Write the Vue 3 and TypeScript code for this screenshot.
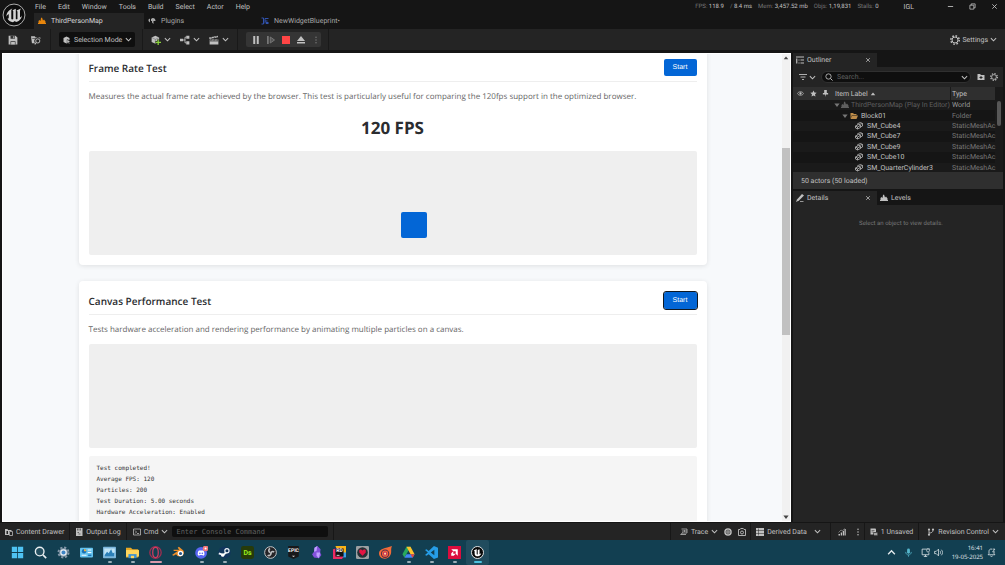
<script setup lang="ts">
import { h, ref } from 'vue'

const icons: Record<string, string> = {
  chevron: '<path d="M2 5 8 11 14 5" fill="none" stroke="currentColor" stroke-width="2.4"/>',
  chevronUp: '<path d="M2 11 8 5 14 11" fill="none" stroke="currentColor" stroke-width="2.4"/>',
  close: '<path d="M3 3 13 13M13 3 3 13" fill="none" stroke="currentColor" stroke-width="2"/>',
  minus: '<path d="M2 8H14" stroke="currentColor" stroke-width="2"/>',
  restore: '<path d="M2 5h9v9H2zM5 5V2h9v9h-3" fill="none" stroke="currentColor" stroke-width="1.8"/>',
  dots: '<g fill="currentColor"><circle cx="8" cy="2.5" r="1.5"/><circle cx="8" cy="8" r="1.5"/><circle cx="8" cy="13.5" r="1.5"/></g>',
  ring: '<circle cx="8" cy="8" r="7.3" fill="#0c0c0c" stroke="#bdbdbd" stroke-width=".6"/><path d="M2.9 9.2C3 6.200 4.800 4.400 7 3.600 6.300 4.200 6.200 4.700 6.200 5.300V10.300C6.200 11 6.900 11.200 7.500 10.700V5.300L7 4.800 9.200 3.900V10.600C9.600 11 10 10.900 10.300 10.600V5.600L9.700 5 12.700 3.700C12 4.600 12 5.100 12 6V9.700C12.600 9.400 13 8.900 13.300 8.300 13 10.600 11.300 12.300 9.300 12.700L8.600 12 7.300 12.900C5.500 12.600 4.200 11.700 3.600 10.400 4.200 10.600 4.500 10.300 4.500 9.700V7.400C3.900 7.700 3.300 8.400 2.900 9.200Z" fill="#d2d2d2"/>',
  level: '<path d="M0 14V12H16V14ZM1 12V8L3 6 5 8 6 2 8 1 10 7 12 5 15 9V12Z" fill="currentColor"/>',
  plug: '<path d="M9 2C14 2 15 5 15 8H11V14L8 11V8H6V4ZM1 5 4 3V11L1 8Z" fill="currentColor"/>',
  widget: '<path d="M1 2H5V14H1M8 3H15M8 3V13M8 8H13" fill="none" stroke="currentColor" stroke-width="2"/><path d="M10 10h5v4h-5z" fill="currentColor"/>',
  save: '<path d="M1 1H12L15 4V15H1Z" fill="currentColor"/><path d="M4 1H11V6H4ZM4 10H12V15H4Z" fill="#333"/><path d="M8.500 2H10V5H8.500ZM5 11H11V15H5Z" fill="currentColor"/>',
  browse: '<path d="M0 2H6L7.500 4H15V6.500A5 5 0 0 0 6.500 13H1.500Z" fill="currentColor"/><path d="M2 5.500H8" stroke="#252525"/><circle cx="10.800" cy="9.500" r="3.300" fill="#252525" stroke="currentColor" stroke-width="1.500"/><path d="M8.500 12 6 15" stroke="currentColor" stroke-width="1.800"/>',
  mode: '<path d="M7 1 13 4V8L8 7 9 14 7 15 1 12V4Z" fill="currentColor"/><path d="M8 7 15 11 12 12 13.500 15 12 16 10.500 13 8 15Z" fill="currentColor" stroke="#101010" stroke-width=".7"/>',
  addCube: '<path d="M7 1 13 4V11L7 14 1 11V4Z" fill="currentColor"/><path d="M1 4 7 7 13 4M7 7V14" fill="none" stroke="#555" stroke-width=".7"/><path d="M11.500 7V16M7 11.500H16" stroke="#252525" stroke-width="4"/><path d="M11.500 7.500V16M7.300 11.700H16" stroke="#8bd33d" stroke-width="2"/>',
  blueprint: '<path d="M0 6H5V10H0ZM10 1H15V6H10ZM10 10H15V15H10Z" fill="currentColor"/><path d="M5 8H8M10 3.500H8V12.500H10" fill="none" stroke="currentColor" stroke-width="1.400"/>',
  clapper: '<path d="M1 7H15V15H1ZM0 4 14 1 14.600 3.500 .8 6.400Z" fill="currentColor"/><path d="M3 3.500 5 5.500M7 2.500 9 4.500M11 2 13 4M4 7 3 9M9 7 8 9M14 7 13 9M1 9.500H15" stroke="#252525" stroke-width="1.200"/>',
  pause: '<path d="M2.500 0H6.500V16H2.500ZM9.500 0H13.500V16H9.500Z" fill="currentColor"/>',
  step: '<path d="M0 0H3.500V16H0Z" fill="currentColor"/><path d="M6.500 2 15 8 6.500 14Z" fill="#555" stroke="currentColor" stroke-width="2"/>',
  stop: '<path d="M0 0H16V16H0Z" fill="currentColor"/>',
  eject: '<path d="M8 0 16 10H0ZM0 12H16V15H0Z" fill="currentColor"/>',
  gear: '<circle cx="8" cy="8" r="4.800" fill="none" stroke="currentColor" stroke-width="1.600"/><circle cx="8" cy="8" r="6.700" fill="none" stroke="currentColor" stroke-width="2.400" stroke-dasharray="2.630 2.630"/>',
  outliner: '<path d="M0 2H16M5 8H7M9 8H16M5 14H7M9 14H16M1.500 5V15" stroke="currentColor" stroke-width="2.400" fill="none"/>',
  filter: '<path d="M0 3H16M3 8H13M6 13H10" stroke="currentColor" stroke-width="1.800"/>',
  search: '<circle cx="7" cy="7" r="5.300" fill="none" stroke="currentColor" stroke-width="1.700"/><path d="M11 11 15 15" stroke="currentColor" stroke-width="2"/>',
  newFolder: '<path d="M1 2H6L8 4H15V14H1Z" fill="currentColor"/><path d="M8 6V12M5 9H11" stroke="#252525" stroke-width="2"/>',
  eye: '<path d="M1 8C4 2.500 12 2.500 15 8 12 13.500 4 13.500 1 8Z" fill="none" stroke="currentColor" stroke-width="1.600"/><circle cx="8" cy="8" r="2.600" fill="currentColor"/>',
  star: '<path d="M8 1 10.200 5.700 15.300 6.300 11.500 9.800 12.500 15 8 12.400 3.500 15 4.500 9.800 .7 6.300 5.800 5.700Z" fill="currentColor"/>',
  pin: '<path d="M5 0H11V7H14V10.500H9L8 16 7 10.500H2V7H5Z" fill="currentColor"/>',
  up: '<path d="M8 4 14 11H2Z" fill="currentColor"/>',
  down: '<path d="M8 13 15 4H1Z" fill="currentColor"/>',
  folder: '<path d="M1 13V2H6L8 4H13V6H4Z" fill="currentColor"/><path d="M4 7H16L13 14H1Z" fill="currentColor"/>',
  mesh: '<g fill="none" stroke="currentColor" stroke-width="1.500"><path d="M1 8 7 5 11 7 11 11 5 14 1 12ZM1 8 5 10 11 7M5 10V14"/><path d="M5 5V3.500L11 1 15 3V8L11 10"/><path d="M8 5 15 3"/></g>',
  pencil: '<path d="M0 16 2 11 12 0 16 3 6 13Z" fill="currentColor"/><path d="M8 15H15" stroke="currentColor" stroke-width="1.500"/>',
  drawer: '<path d="M0 2H5L6 4H13V6H8V14H0Z" fill="currentColor"/><path d="M9 7H15V15H9ZM4 6V12" fill="none" stroke="currentColor" stroke-width="1.500"/><path d="M3 6H6V12H3Z" fill="#252525"/>',
  log: '<path d="M2 0H15V16H2Z" fill="currentColor"/><path d="M5 1V5M8 1V5M11 1V5M5 9H8M7 12H11" stroke="#252525" stroke-width="1.200"/>',
  console: '<path d="M1 2H15V14H1Z" fill="none" stroke="currentColor" stroke-width="1.500"/><path d="M4 5 7 8 4 11M8 11H12" fill="none" stroke="currentColor" stroke-width="1.500"/>',
  trace: '<path d="M3 2H14V10H4M6 4V8M9 4V8M12 4V8M1 13H12M2 13 5 9" fill="none" stroke="currentColor" stroke-width="1.500"/>',
  record: '<circle cx="8" cy="8" r="7.500" fill="currentColor"/><circle cx="8" cy="8" r="4" fill="none" stroke="#252525" stroke-width="1.300"/><circle cx="8" cy="8" r="1.300" fill="#252525"/>',
  camera: '<path d="M1 3H4L5.500 1H10.500L12 3H15V15H1Z" fill="none" stroke="currentColor" stroke-width="1.800"/><circle cx="8" cy="9" r="3" fill="none" stroke="currentColor" stroke-width="1.800"/>',
  data: '<path d="M0 0H16V5H0ZM0 6H16V10H0ZM0 11H16V16H0Z" fill="currentColor"/><path d="M5 1V15" stroke="#252525"/>',
  bars: '<path d="M1 12H4V15H1ZM5.500 9H8V15H5.500ZM9.500 6H12V15H9.500ZM13 2H15.500V15H13Z" fill="currentColor"/><path d="M1 9 6 4 9 6 13 1" fill="none" stroke="currentColor"/>',
  unsaved: '<path d="M1 1H11L12 3V8H7V13H1Z" fill="currentColor"/><path d="M3 5H9M3 8H7" stroke="#252525"/><path d="M8 9H15V15H8ZM12 9V15" fill="currentColor" stroke="#252525" stroke-width=".8"/>',
  branch: '<path d="M4 3V13M4 10C8 10 12 9 12 4" fill="none" stroke="currentColor" stroke-width="1.800"/><circle cx="4" cy="3" r="2.200" fill="currentColor"/><circle cx="4" cy="13.500" r="2.200" fill="currentColor"/><circle cx="12" cy="3" r="2.200" fill="currentColor"/>',
  mic: '<rect x="5.500" y="1" width="5" height="9" rx="2.500" fill="currentColor"/><path d="M3 7C3 14 13 14 13 7M8 12.500V15.500" fill="none" stroke="currentColor" stroke-width="1.300"/>',
  monitor: '<path d="M9 2H2V12H14V8M5 15H11M8 12V15" fill="none" stroke="currentColor" stroke-width="1.400"/><path d="M10 2H15V5C15 8 10 8 10 5ZM11 0V2M14 0V2" fill="none" stroke="currentColor" stroke-width="1.200"/>',
  speaker: '<path d="M1 6H4L8 2V14L4 10H1Z" fill="none" stroke="currentColor" stroke-width="1.300"/><path d="M10.500 5C12 7 12 9 10.500 11M13 3C16 6 16 10 13 13" fill="none" stroke="currentColor" stroke-width="1.300"/>',
  bell: '<path d="M9 2C5 1 3 4 3.500 7V10L2 12H14L12.500 10V8M6 14C7 15.500 9 15.500 10 14M10 2H14L10 7H14" fill="none" stroke="currentColor" stroke-width="1.400"/>',
  windows: '<g fill="#4fc3f3"><path d="M1 1H7.500V7.500H1ZM8.500 1H15V7.500H8.500ZM1 8.500H7.500V15H1ZM8.500 8.500H15V15H8.500Z"/></g>',
  taskSearch: '<circle cx="7" cy="6.800" r="5.300" fill="#244f60" stroke="#e8eef0" stroke-width="1.700"/><path d="M11 11 15 15" stroke="#e8eef0" stroke-width="2"/>',
  taskGear: '<circle cx="8" cy="8" r="5.300" fill="#8497a8"/><circle cx="8" cy="8" r="6.200" fill="none" stroke="#8497a8" stroke-width="2.400" stroke-dasharray="2.700 2.170"/><circle cx="8" cy="8" r="3.300" fill="#3d83c4" stroke="#e7edf2" stroke-width="1.500"/>',
  panel: '<rect x="0" y="2" width="16" height="12" rx="1" fill="#65c3ee"/><circle cx="5" cy="6.500" r="2.700" fill="#1b72b5"/><path d="M5 6.500V3.800A2.700 2.700 0 0 1 7.700 6.500Z" fill="#f4b43c"/><path d="M9.500 5H14M9.500 8H14M2 11.500H8" stroke="#f6fcff" stroke-width="1.300"/><path d="M10 11.500H14" stroke="#1b72b5" stroke-width="1.800"/>',
  monitorApp: '<rect x="0" y="1" width="16" height="14" rx="1" fill="#7bb6dc"/><path d="M1.500 3H14.500V13H1.500Z" fill="#bfe4f6"/><path d="M2 11 5 7 7 9 10 4 12 9 14 8V13H2Z" fill="#2b80b8"/>',
  explorer: '<path d="M0 2H6L8 4H15V14H0Z" fill="#e6a825"/><path d="M0 5H16V13H0Z" fill="#ffd65c"/><path d="M3 10H13V15H3Z" fill="#3b91d3"/><path d="M6 12H10V15H6Z" fill="#ffd65c"/>',
  opera: '<ellipse cx="8" cy="8" rx="7" ry="7.200" fill="none" stroke="#a02e50" stroke-width="1.600"/><ellipse cx="8" cy="8" rx="3.400" ry="6.200" fill="none" stroke="#d33c60" stroke-width="1.500"/>',
  blender: '<path d="M0 11 7 6H2V4.500H9L7 2 8.500 1 14 5.500A5 5 0 1 1 5 10L2 12Z" fill="#f0902a"/><circle cx="10.500" cy="9.300" r="3.400" fill="#fff"/><circle cx="10.500" cy="9.300" r="1.900" fill="#265787"/>',
  discord: '<circle cx="7.500" cy="8.500" r="7.300" fill="#5865f2"/><path d="M3.500 11C3 8 4 6 5 5.500L10 5.500C11 6 12 8 11.500 11L10 12 9 11H6L5 12Z" fill="#fff"/><circle cx="6" cy="9" r="1" fill="#5865f2"/><circle cx="9" cy="9" r="1" fill="#5865f2"/><circle cx="13" cy="3" r="3.500" fill="#f2777a"/><circle cx="13" cy="3" r="1.200" fill="#fff"/>',
  steam: '<circle cx="8" cy="8" r="7.500" fill="#12355d"/><path d="M1 9 6.500 11 11 7" fill="none" stroke="#f0f4f7" stroke-width="2.400"/><circle cx="11" cy="5.800" r="2.600" fill="#12355d" stroke="#f0f4f7" stroke-width="1.400"/><circle cx="5.800" cy="11.300" r="2" fill="#fff"/>',
  ds: '<rect width="16" height="16" rx="3" fill="#273b09"/>',
  obs: '<circle cx="8" cy="8" r="7.200" fill="#252427" stroke="#c7c9cb" stroke-width="1.200"/><g fill="none" stroke="#bfc1c3" stroke-width="2"><path d="M7.500 3.200A2.600 2.600 0 0 0 7.500 8"/><path d="M12.500 7.500A2.600 2.600 0 0 0 8.200 9.200"/><path d="M4.500 11.200A2.600 2.600 0 0 0 8.500 8.300"/></g>',
  epic: '<path d="M1.500 0H14.500V13L8 16 1.500 13Z" fill="#18181a"/><path d="M6 12H10L8 13.500Z" fill="#ddd"/>',
  obsidian: '<path d="M9 0 13 4 12.500 8 14 11 11 15 5 14 2.500 10 5 7 5.500 2Z" fill="#8351dc"/><path d="M9 0 8 6 5 7 5.500 2ZM8 8 12.500 8 11 15 8 12Z" fill="#bea0ff"/>',
  rider: '<path d="M3 0H16V12H8Z" fill="#f7b416"/><path d="M0 4 8 2 14 12 11 16H0Z" fill="#ee2b64"/><path d="M12 8H16V14H12Z" fill="#3b9fee"/><path d="M3 3H13V13H3Z" fill="#111"/><path d="M4.500 11.500H8" stroke="#fff"/>',
  heart: '<rect width="16" height="16" rx="1.500" fill="#9ca0a3"/><circle cx="8" cy="8" r="6.500" fill="#273035"/><path d="M8 12 4 8V5L6 4 8 5.500 10 4 12 5V8Z" fill="#e51443"/>',
  flame: '<path d="M16 0C14 4 16 8 14 11 11 18 0 17 0 9 0 3 8 3 16 0Z" fill="#f26b38"/><circle cx="7.500" cy="9.500" r="4.500" fill="none" stroke="#59294d" stroke-width="1.300"/><circle cx="7.500" cy="9.500" r="2" fill="#ffd2a0" stroke="#c52d55" stroke-width="1.300"/>',
  drive: '<path d="M5.500 1H10.500L8 5.500 3 14 .5 10Z" fill="#28a85c"/><path d="M10.500 1 15.500 10H10.500L5.500 1Z" fill="#fbc22c"/><path d="M5.500 10H15.500L13 14.500H3Z" fill="#4285f4"/><path d="M10.500 10H15.500L13 14.500Z" fill="#e94335"/>',
  code: '<path d="M11 0 16 2V14L11 16 4.500 10 2 12 0 11 3.500 8 0 5 2 4 4.500 6ZM11.500 4.500 7 8 11.500 11.500Z" fill="#269ee8" fill-rule="evenodd"/>',
  amd: '<rect width="16" height="16" fill="#db0d3e"/><path d="M4 4H12V12L9.500 9.500V6.500H6.500ZM4 9 6.500 6.500V9.500H9.500L7 12H4Z" fill="#fff"/>',
  unrealApp: '<circle cx="8" cy="8" r="7.400" fill="#090909" stroke="#f6f6f6" stroke-width="1.100"/><path d="M3.500 5.500 7 3.800V10L8.300 10.500V5L10.500 4V10.300L12.500 9C12 12 9.500 13 8 12.500 6 13 4.500 11.500 4.500 9.500V6.500Z" fill="#fff"/>',
}
const Icon = (props: { name: string }) =>
  h('svg', { viewBox: '0 0 16 16', class: 'icon', 'aria-hidden': 'true', innerHTML: icons[props.name] })
Icon.props = ['name']

const menus = ['File', 'Edit', 'Window', 'Tools', 'Build', 'Select', 'Actor', 'Help']
const stats = [
  ['FPS:', '118.9'],
  ['/', '8.4 ms'],
  ['Mem:', '3,457.52 mb'],
  ['Objs:', '1,19,831'],
  ['Stalls:', '0'],
]
const actors = ['SM_Cube4', 'SM_Cube7', 'SM_Cube9', 'SM_Cube10', 'SM_QuarterCylinder3']
const results = ['Test completed!', 'Average FPS: 120', 'Particles: 200', 'Test Duration: 5.00 seconds', 'Hardware Acceleration: Enabled']
const apps: { icon: string; label: string; state?: string; text?: string }[] = [
  { icon: 'windows', label: 'Start menu' },
  { icon: 'taskSearch', label: 'Search' },
  { icon: 'taskGear', label: 'Settings' },
  { icon: 'panel', label: 'Control Panel' },
  { icon: 'monitorApp', label: 'Resource Monitor', state: 'running' },
  { icon: 'explorer', label: 'File Explorer', state: 'running' },
  { icon: 'opera', label: 'Opera', state: 'open' },
  { icon: 'blender', label: 'Blender' },
  { icon: 'discord', label: 'Discord', state: 'running' },
  { icon: 'steam', label: 'Steam', state: 'running' },
  { icon: 'ds', label: 'Designer', text: 'Ds' },
  { icon: 'obs', label: 'OBS Studio' },
  { icon: 'epic', label: 'Epic Games', text: 'EPIC' },
  { icon: 'obsidian', label: 'Obsidian' },
  { icon: 'rider', label: 'Rider', text: 'RD' },
  { icon: 'heart', label: 'Heart' },
  { icon: 'flame', label: 'Flame' },
  { icon: 'drive', label: 'Drive', state: 'running' },
  { icon: 'code', label: 'Code', state: 'running' },
  { icon: 'amd', label: 'AMD Software', state: 'running' },
  { icon: 'unrealApp', label: 'Unreal Editor', state: 'active' },
]
const boxProgress = ref(51.4)
const command = ref('')
const query = ref('')
</script>

<template>
  <div class="desktop">
    <header class="titlebar">
      <Icon name="ring" class="logo" />
      <div class="title-rows">
        <div class="menu-row">
          <nav class="menus">
            <button v-for="m in menus" :key="m">{{ m }}</button>
          </nav>
          <div class="stats">
            <span v-for="[label, value] in stats" :key="label"><i>{{ label }}</i> {{ value }}</span>
          </div>
          <span class="project">IGL</span>
          <div class="window-buttons">
            <button aria-label="Minimize"><Icon name="minus" /></button>
            <button aria-label="Restore"><Icon name="restore" /></button>
            <button aria-label="Close"><Icon name="close" /></button>
          </div>
        </div>
        <div class="doc-tabs">
          <button class="doc-tab selected"><Icon name="level" class="orange" />ThirdPersonMap</button>
          <button class="doc-tab"><Icon name="plug" />Plugins</button>
          <button class="doc-tab"><Icon name="widget" class="blue" />NewWidgetBlueprint•</button>
        </div>
      </div>
    </header>

    <div class="toolbar">
      <div class="group files">
        <button aria-label="Save"><Icon name="save" class="large" /></button>
        <button aria-label="Browse"><Icon name="browse" class="large" /></button>
      </div>
      <div class="group">
        <button class="mode"><Icon name="mode" /><span>Selection Mode</span><Icon name="chevron" class="small" /></button>
      </div>
      <div class="group adders">
        <button aria-label="Add"><Icon name="addCube" class="large" /><Icon name="chevron" class="small" /></button>
        <button aria-label="Blueprints"><Icon name="blueprint" class="large" /><Icon name="chevron" class="small" /></button>
        <button aria-label="Cinematics"><Icon name="clapper" class="large" /><Icon name="chevron" class="small" /></button>
      </div>
      <div class="group">
        <div class="play">
          <button aria-label="Pause"><Icon name="pause" /></button>
          <button aria-label="Step" class="dim"><Icon name="step" /></button>
          <button aria-label="Stop" class="red"><Icon name="stop" /></button>
          <button aria-label="Eject"><Icon name="eject" /></button>
          <button aria-label="More" class="dim"><Icon name="dots" /></button>
        </div>
      </div>
      <button class="settings"><Icon name="gear" class="large" />Settings<Icon name="chevron" class="small" /></button>
    </div>

    <div class="workspace">
      <div class="viewport">
        <main class="page">
          <section class="card">
            <div class="card-head">
              <h2>Frame Rate Test</h2>
              <button class="start">Start</button>
            </div>
            <p>Measures the actual frame rate achieved by the browser. This test is particularly useful for comparing the 120fps support in the optimized browser.</p>
            <div class="fps">120 FPS</div>
            <div class="canvas"><div class="mover" :style="{ left: boxProgress + '%' }"></div></div>
          </section>
          <section class="card">
            <div class="card-head">
              <h2>Canvas Performance Test</h2>
              <button class="start focused">Start</button>
            </div>
            <p>Tests hardware acceleration and rendering performance by animating multiple particles on a canvas.</p>
            <div class="canvas"></div>
            <div class="output"><div v-for="r in results" :key="r">{{ r }}</div></div>
          </section>
        </main>
        <div class="page-scroll">
          <Icon name="up" />
          <div class="track"><div class="thumb"></div></div>
          <Icon name="down" />
        </div>
      </div>

      <aside class="side">
        <div class="panel-tabs">
          <div class="panel-tab selected"><Icon name="outliner" /><span>Outliner</span><button aria-label="Close Outliner"><Icon name="close" /></button></div>
        </div>
        <div class="search-row">
          <button aria-label="Filter" class="filter"><Icon name="filter" /><Icon name="chevron" class="small" /></button>
          <label class="search-box"><Icon name="search" /><input v-model="query" aria-label="Search" placeholder="Search..." /><Icon name="chevron" class="small" /></label>
          <button aria-label="New folder"><Icon name="newFolder" /></button>
          <button aria-label="Outliner settings"><Icon name="gear" /></button>
        </div>
        <div class="tree">
          <table>
            <colgroup><col class="c-eye" /><col class="c-flag" /><col class="c-flag" /><col /><col class="c-type" /></colgroup>
            <thead>
              <tr>
                <th><Icon name="eye" /></th>
                <th><Icon name="star" /></th>
                <th><Icon name="pin" /></th>
                <th class="name"><div>Item Label <Icon name="up" /></div></th>
                <th class="type">Type</th>
              </tr>
            </thead>
            <tbody>
              <tr class="root">
                <td colspan="3"></td>
                <td><div class="cell"><Icon name="down" class="arrow" /><Icon name="level" />ThirdPersonMap (Play In Editor)</div></td>
                <td class="world">World</td>
              </tr>
              <tr>
                <td colspan="3"></td>
                <td><div class="cell level-1"><Icon name="down" class="arrow" /><Icon name="folder" class="tan" />Block01</div></td>
                <td>Folder</td>
              </tr>
              <tr v-for="a in actors" :key="a">
                <td colspan="3"></td>
                <td><div class="cell level-2"><Icon name="mesh" />{{ a }}</div></td>
                <td>StaticMeshAc</td>
              </tr>
            </tbody>
          </table>
          <div class="tree-scroll"></div>
        </div>
        <div class="count">50 actors (50 loaded)</div>
        <div class="panel-tabs lower">
          <div class="panel-tab selected"><Icon name="pencil" /><span>Details</span><button aria-label="Close Details"><Icon name="close" /></button></div>
          <div class="panel-tab"><Icon name="level" /><span>Levels</span></div>
        </div>
        <div class="details">Select an object to view details.</div>
      </aside>
    </div>

    <footer class="statusbar">
      <button><Icon name="drawer" />Content Drawer</button>
      <button><Icon name="log" />Output Log</button>
      <div class="command">
        <button><Icon name="console" />Cmd <Icon name="chevron" class="small" /></button>
        <input v-model="command" aria-label="Console command" placeholder="Enter Console Command" />
      </div>
      <div class="filler"></div>
      <div class="trace">
        <button><Icon name="trace" />Trace<Icon name="chevron" class="small" /></button>
        <button aria-label="Record"><Icon name="record" /></button>
        <button aria-label="Snapshot"><Icon name="camera" /></button>
      </div>
      <button class="derived"><Icon name="data" />Derived Data<Icon name="chevron" class="small" /></button>
      <div class="perf">
        <button aria-label="Performance"><Icon name="bars" /></button>
        <button aria-label="More options"><Icon name="dots" /></button>
      </div>
      <button><Icon name="unsaved" />1 Unsaved</button>
      <button class="revision"><Icon name="branch" />Revision Control<Icon name="chevron" class="small" /></button>
    </footer>

    <footer class="taskbar">
      <div class="apps">
        <button v-for="app in apps" :key="app.label" :aria-label="app.label" :class="app.state">
          <Icon :name="app.icon" />
          <span v-if="app.text" class="app-text" :class="app.icon">{{ app.text }}</span>
        </button>
      </div>
      <div class="tray">
        <button aria-label="Hidden icons"><Icon name="chevronUp" class="small" /></button>
        <button aria-label="Microphone" class="mic"><Icon name="mic" /></button>
        <button aria-label="Network and sound" class="net"><Icon name="monitor" /><Icon name="speaker" /></button>
        <div class="clock"><div>16:41</div><div>19-05-2025</div></div>
        <button aria-label="Notifications"><Icon name="bell" /></button>
      </div>
    </footer>
  </div>
</template>

<style>
body { background: #151515; }
</style>

<style scoped>
* { box-sizing: border-box; }
.desktop {
  display: flex;
  flex-direction: column;
  height: 100vh;
  overflow: hidden;
  background: #151515;
  color: #c0c0c0;
  font: 7px/10px Roboto, "Liberation Sans", sans-serif;
  text-rendering: geometricPrecision;
  white-space: nowrap;
}
button {
  display: flex;
  align-items: center;
  margin: 0;
  padding: 0;
  border: 0;
  background: none;
  color: inherit;
  font: inherit;
  text-rendering: inherit;
}
input { min-width: 0; border: 0; outline: 0; background: none; color: inherit; text-rendering: inherit; }
.icon { display: block; flex: none; width: 8px; height: 8px; }
.icon.small { width: 7px; height: 7px; }
.icon.large { width: 10px; height: 10px; }

.titlebar { display: flex; flex: none; height: 29px; }
.icon.logo { width: 24px; height: 24px; margin: 3px 8px 0 2px; }
.title-rows { flex: 1; min-width: 0; }
.menu-row { display: flex; align-items: center; height: 13px; padding-right: 7px; }
.menus { display: flex; gap: 12px; margin-right: auto; padding-left: 1px; }
.stats { display: flex; gap: 6px; font-size: 6px; }
.stats i { color: #777; font-style: normal; }
.project { margin: 0 33px 0 25px; }
.window-buttons { display: flex; gap: 15px; }
.window-buttons .icon { width: 7px; height: 7px; }
.doc-tabs { display: flex; height: 16px; }
.doc-tab { width: 110px; padding-left: 4px; gap: 5px; color: #a8a8a8; }
.doc-tab:nth-child(2) { width: 113px; }
.doc-tab.selected { background: #242424; color: #d8d8d8; }
.orange { color: #e8860c; }
.blue { color: #3153ae; }

.toolbar { display: flex; flex: none; height: 21px; background: #242424; }
.group { display: flex; align-items: center; padding: 0 7px 0 8px; border-right: 1px solid #191919; }
.files { gap: 13px; padding: 0 9px 0 8px; }
.mode { width: 76px; height: 15px; padding: 0 4px; gap: 3px; border-radius: 2px; background: #0f0f0f; }
.adders { gap: 9px; padding-right: 8px; }
.adders button { gap: 3px; width: 20px; }
.play { display: flex; align-items: center; gap: 7px; height: 15px; padding: 0 1px 0 6px; border-radius: 2px; background: #353535; }
.red { color: #ff4545; }
.dim { color: #777; }
.settings { gap: 2px; margin-left: auto; padding-right: 8px; }

.workspace { display: flex; flex: 1; min-height: 0; gap: 2px; padding: 3px 2px 1px; }
.viewport { display: flex; flex: 1; min-width: 0; border: 1px solid #fff; background: #f7f9fb; }
.page {
  flex: 1;
  min-width: 0;
  overflow: hidden;
  padding: 0 16px;
  color: #2b2d30;
  font-family: "Open Sans", "Noto Sans", sans-serif;
}
.card {
  max-width: 628px;
  margin: 0 auto 16px;
  padding: 10px;
  border-radius: 4px;
  background: #fff;
  box-shadow: 0 1px 5px rgba(0, 0, 0, 0.1);
}
.card:first-child { margin-top: -6px; }
.card-head { display: flex; align-items: flex-start; justify-content: space-between; height: 24px; border-bottom: 1px solid #eee; }
h2 { margin: 0; font-size: 10px; line-height: 20px; font-weight: 600; }
.start {
  justify-content: center;
  width: 33px;
  height: 17px;
  margin-top: 1px;
  border-radius: 2px;
  background: #0366d6;
  color: #fff;
  font: 7px/10px "Liberation Sans", Arial, sans-serif;
}
.start.focused { outline: 1px solid #101820; }
.card p { margin: 9px 0 8px; color: #666; font-size: 8px; line-height: 12px; }
.fps { margin: 13px 0 11px; font-size: 17px; line-height: 24px; font-weight: 700; text-align: center; }
.canvas { position: relative; height: 104px; border-radius: 2px; background: #efefef; }
.mover { position: absolute; bottom: 17px; width: 26px; height: 26px; border-radius: 2px; background: #0366d6; }
.output {
  height: 90px;
  margin-top: 8px;
  padding: 7px 8px;
  border-radius: 2px;
  background: #f5f5f5;
  color: #333;
  font: 6px/11px "DejaVu Sans Mono", "Liberation Mono", monospace;
}
.page-scroll { display: flex; flex-direction: column; align-items: center; flex: none; width: 8px; background: #f1f1f1; color: #444; }
.page-scroll .icon { width: 6px; height: 8px; }
.track { flex: 1; width: 100%; padding-top: 86px; }
.thumb { height: 187px; background: #c1c1c1; }

.side { display: flex; flex-direction: column; flex: none; width: 210px; background: #242424; }
.panel-tabs { display: flex; flex: none; height: 14px; background: #151515; }
.panel-tab { display: flex; align-items: center; gap: 3px; width: 84px; padding: 0 6px 0 3px; }
.panel-tab.selected { background: #242424; }
.panel-tab button { margin-left: auto; }
.panel-tab button .icon { width: 6px; height: 6px; }
.search-row { display: flex; align-items: center; gap: 5px; flex: none; height: 20px; padding: 0 5px 0 6px; }
.filter { gap: 2px; }
.search-box { display: flex; align-items: center; gap: 4px; flex: 1; min-width: 0; height: 12px; margin-right: 1px; padding: 0 2px 0 3px; border: 1px solid #303030; border-radius: 6px; background: #0f0f0f; }
.search-box input { flex: 1; padding: 0; font: inherit; }
input::placeholder { color: #606060; opacity: 1; }
.tree { position: relative; flex: none; height: 85px; padding-right: 8px; overflow: hidden; background: #1a1a1a; }
table { width: 100%; height: 86px; border-spacing: 0; table-layout: fixed; line-height: 8px; }
.c-eye { width: 14px; }
.c-flag { width: 12px; }
.c-type { width: 45px; }
th, td { padding: 0; text-align: left; font-weight: 400; }
th { height: 13px; background: #2f2f2f; }
th > .icon { width: 7px; height: 7px; margin: 0 auto; }
th.name { padding-left: 4px; }
th.name div { display: flex; align-items: center; gap: 2px; }
th.name .icon { width: 6px; height: 6px; }
th.type { padding-left: 1px; border-left: 1px solid #1a1a1a; }
td { color: #777; }
td:last-child { padding-left: 2px; }
td.world { color: #999; }
tbody tr:nth-child(even) { background: #151515; }
.cell { display: flex; align-items: center; gap: 3px; padding-left: 4px; color: #c0c0c0; }
.root .cell { gap: 2px; padding-left: 3px; color: #5f5f5f; }
.cell.level-1 { padding-left: 11px; }
.cell.level-2 { padding-left: 24px; gap: 4px; }
.cell .arrow { width: 6px; height: 6px; margin-right: -1px; color: #777; }
.tan { color: #bd8b49; }
.tree-scroll { position: absolute; top: 14px; right: 2px; width: 4px; height: 25px; border-radius: 2px; background: #575757; }
.count { flex: none; height: 17px; padding-left: 8px; line-height: 18px; background: #2f2f2f; }
.lower { height: 16px; padding-top: 2px; }
.details { padding: 14px 0 0 6px; color: #777; font-size: 6px; text-align: center; }

.statusbar { display: flex; flex: none; height: 17px; background: #242424; }
.statusbar > * { display: flex; align-items: center; gap: 3px; padding: 0 5px; border-right: 1px solid #171717; }
.statusbar > :last-child { border: 0; }
.statusbar button { gap: 3px; }
.statusbar .command { padding-left: 6px; }
.command input { width: 156px; height: 11px; margin-left: 1px; padding: 0 4px; border-radius: 2px; background: #0f0f0f; font: 7px/10px "DejaVu Sans Mono", "Liberation Mono", monospace; }
.statusbar .filler { flex: 1; min-width: 0; }
.statusbar .trace { gap: 6px; padding-left: 9px; padding-right: 4px; }
.statusbar .derived .small { margin: 0 4px; }
.statusbar .perf { gap: 8px; padding: 0 2px 0 7px; }
.statusbar .revision { padding: 0 6px 0 8px; }

.taskbar { display: flex; flex: none; justify-content: space-between; height: 25px; padding: 0 9px 0 6px; background: #123f51; }
.apps { display: flex; }
.apps button { position: relative; justify-content: center; width: 23px; height: 25px; }
.apps .icon { width: 13px; height: 13px; }
.apps button::after { content: ""; position: absolute; bottom: 2px; left: 50%; width: 0; height: 2px; border-radius: 1px; background: #9aafb8; transform: translateX(-50%); }
.apps .running::after { width: 4px; }
.apps .open::after { width: 12px; background: #d99aab; }
.apps .active::after { width: 8px; background: #4cc2e0; }
.apps .active { border-radius: 2px; background: #214c5e; }
.app-text { position: absolute; left: 0; right: 0; text-align: center; font-weight: 700; }
.app-text.ds { color: #9cf01c; }
.app-text.epic { top: 6px; color: #fff; font-size: 5px; }
.app-text.rider { top: 6px; color: #fff; font-size: 5px; }
.tray { display: flex; align-items: center; gap: 8px; color: #e4eaed; }
.tray .icon { width: 9px; height: 9px; }
.tray .clock { margin-left: 1px; }
.mic { color: #55b6cc; }
.net { gap: 4px; }
.clock { font: 6px/9px "Open Sans", "Noto Sans", sans-serif; text-align: right; }
.tray .clock + button { margin-left: -4px; }
</style>
